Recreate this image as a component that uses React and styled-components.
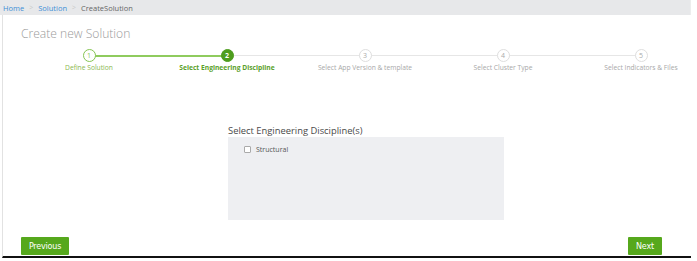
import React from 'react'
import styled, { createGlobalStyle } from 'styled-components'

const Global = createGlobalStyle`
  html, body {
    margin: 0;
    padding: 0;
    background: #fff;
    font-family: "Open Sans", "Liberation Sans", sans-serif;
  }
`

const Page = styled.div`
  width: 697px;
  height: 261px;
  overflow: hidden;
`
const Crumbs = styled.div`
  width: 687px;
  height: 15px;
  padding-left: 3px;
  background: #e7e8ea;
  display: flex;
  align-items: center;
  gap: 5px;
  font-size: 7.5px;
  border-right: 1px solid #eceded;
`
const Crumb = styled.span`
  color: ${p => (p.$current ? '#666' : '#3d8fd6')};
`
const Sep = styled.span`
  color: #c8c8c8;
  font-size: 7px;
`
const Panel = styled.div`
  width: 688px;
  height: 241px;
  margin-left: 2px;
  border-left: 1px solid #e2e2e2;
  border-bottom: 2px solid #111;
  overflow: hidden;
  display: flex;
  flex-direction: column;
`
const Title = styled.h1`
  margin: 10px 0 0 18px;
  font-size: 12.1px;
  font-weight: 300;
  color: #9a9a9a;
  line-height: 17px;
`
const Stepper = styled.div`
  display: grid;
  grid-template-columns: repeat(5, 138px);
  margin: 7px 0 0 17px;
`
const Step = styled.div`
  position: relative;
  display: flex;
  flex-direction: column;
  align-items: center;
`
const Connector = styled.div`
  position: absolute;
  top: 6px;
  left: 50%;
  width: 138px;
  height: ${p => (p.$done ? 2 : 1)}px;
  background: ${p => (p.$done ? '#8fcb5e' : '#e6e6e6')};
`
const Circle = styled.div`
  position: relative;
  z-index: 1;
  width: 13px;
  height: 13px;
  border-radius: 50%;
  box-sizing: border-box;
  display: flex;
  align-items: center;
  justify-content: center;
  font-size: 7px;
  font-weight: ${p => (p.$state === 'active' ? 700 : 400)};
  background: ${p => (p.$state === 'active' ? '#4e9d1e' : '#fff')};
  border: 1px solid
    ${p => (p.$state === 'active' ? '#4e9d1e' : p.$state === 'done' ? '#86c553' : '#dedede')};
  color: ${p => (p.$state === 'active' ? '#fff' : p.$state === 'done' ? '#86c553' : '#aaa')};
`
const StepLabel = styled.div`
  margin-top: 1px;
  font-size: 6.7px;
  white-space: nowrap;
  font-weight: ${p => (p.$state === 'active' ? 700 : 400)};
  color: ${p => (p.$state === 'active' ? '#5a9f2a' : p.$state === 'done' ? '#8ab84f' : '#a8a8a8')};
`
const Section = styled.div`
  margin: 53px 0 0 225px;
  width: 276px;
`
const SectionLabel = styled.div`
  font-size: 9.4px;
  color: #4a4a4a;
  line-height: 12px;
`
const Box = styled.div`
  height: 83px;
  background: #eeeff2;
  padding: 8px 0 0 16px;
  box-sizing: border-box;
`
const Check = styled.label`
  display: flex;
  align-items: center;
  gap: 5px;
  font-size: 7px;
  color: #555;
`
const CheckBox = styled.span`
  width: 5px;
  height: 5px;
  border: 1px solid #aaa;
  border-radius: 1px;
  background: #fff;
`
const Footer = styled.div`
  display: flex;
  justify-content: space-between;
  margin: 17px 0 0 18px;
  width: 641px;
`
const Button = styled.button`
  height: 18px;
  width: ${p => p.$w}px;
  padding: 0;
  border: none;
  border-radius: 1px;
  background: #56a81c;
  color: #fff;
  font-family: "DejaVu Sans", sans-serif;
  font-size: 8px;
  letter-spacing: -0.2px;
  cursor: pointer;
`

const steps = [
  { n: 1, label: 'Define Solution', state: 'done' },
  { n: 2, label: 'Select Engineering Discipline', state: 'active' },
  { n: 3, label: 'Select App Version & template', state: 'todo' },
  { n: 4, label: 'Select Cluster Type', state: 'todo' },
  { n: 5, label: 'Select Indicators & Files', state: 'todo' },
]

const App = () => {
  return (
    <Page>
      <Global />
      <Crumbs>
        <Crumb>Home</Crumb>
        <Sep>&gt;</Sep>
        <Crumb>Solution</Crumb>
        <Sep>&gt;</Sep>
        <Crumb $current>CreateSolution</Crumb>
      </Crumbs>
      <Panel>
        <Title>Create new Solution</Title>
        <Stepper>
          {steps.map((s, i) => (
            <Step key={s.n}>
              {i < steps.length - 1 && <Connector $done={s.state === 'done'} />}
              <Circle $state={s.state}>{s.n}</Circle>
              <StepLabel $state={s.state}>{s.label}</StepLabel>
            </Step>
          ))}
        </Stepper>
        <Section>
          <SectionLabel>Select Engineering Discipline(s)</SectionLabel>
          <Box>
            <Check>
              <CheckBox />
              Structural
            </Check>
          </Box>
        </Section>
        <Footer>
          <Button $w={48}>Previous</Button>
          <Button $w={34}>Next</Button>
        </Footer>
      </Panel>
    </Page>
  )
}

export default App
